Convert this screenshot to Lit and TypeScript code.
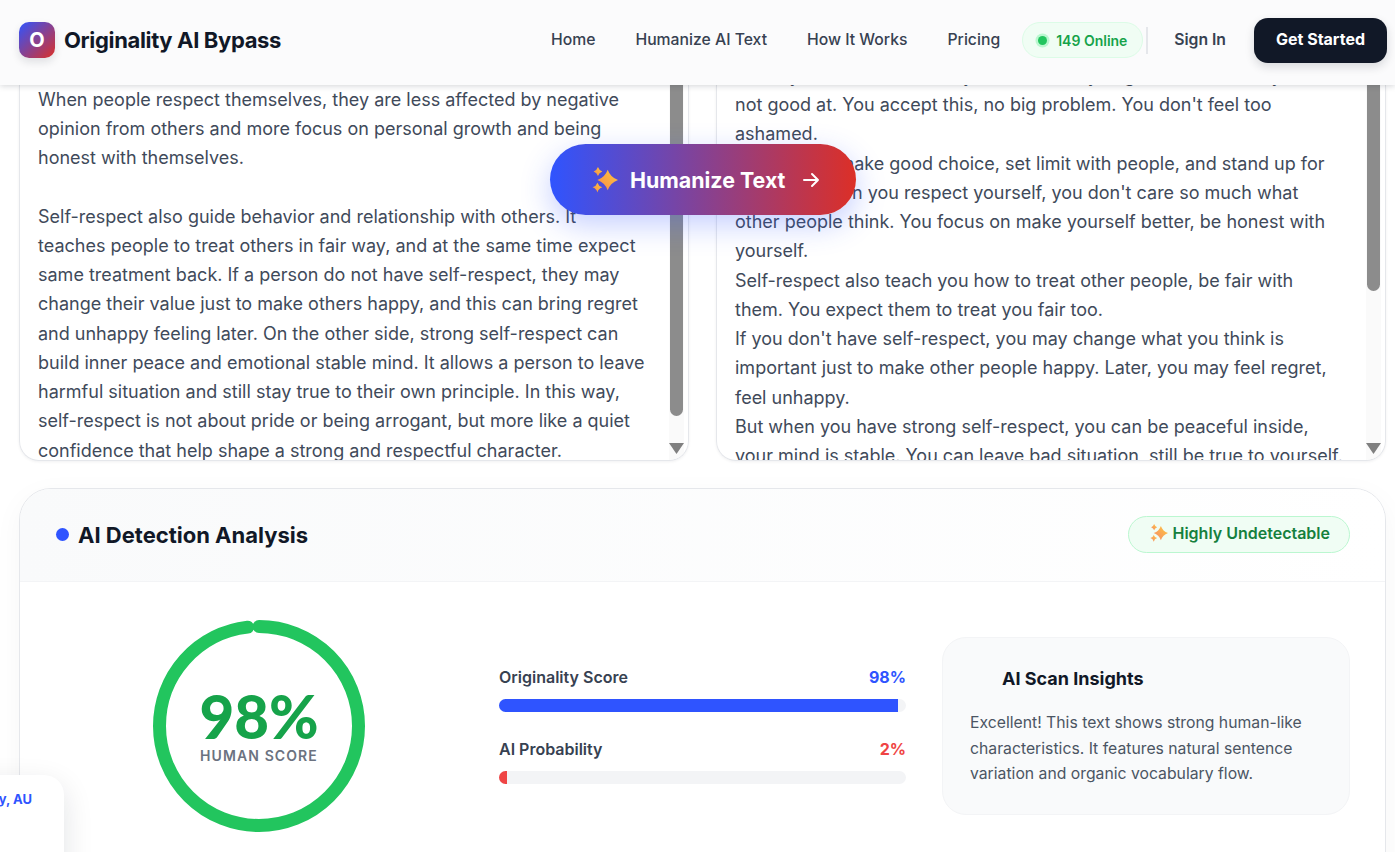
import { LitElement, html, css } from 'lit';
import { customElement } from 'lit/decorators.js';

const LEFT_TEXT = `When people respect themselves, they are less affected by negative opinion from others and more focus on personal growth and being honest with themselves.

Self-respect also guide behavior and relationship with others. It teaches people to treat others in fair way, and at the same time expect same treatment back. If a person do not have self-respect, they may change their value just to make others happy, and this can bring regret and unhappy feeling later. On the other side, strong self-respect can build inner peace and emotional stable mind. It allows a person to leave harmful situation and still stay true to their own principle. In this way, self-respect is not about pride or being arrogant, but more like a quiet confidence that help shape a strong and respectful character.`;

const RIGHT_TEXT = `When you are honest, and you know that you good at and how you
not good at. You accept this, no big problem. You don't feel too ashamed.
It helps you make good choice, set limit with people, and stand up for yourself. When you respect yourself, you don't care so much what other people think. You focus on make yourself better, be honest with yourself.
Self-respect also teach you how to treat other people, be fair with them. You expect them to treat you fair too.
If you don't have self-respect, you may change what you think is important just to make other people happy. Later, you may feel regret, feel unhappy.
But when you have strong self-respect, you can be peaceful inside, your mind is stable. You can leave bad situation, still be true to yourself.`;

const sparkle = (id: string, size: number, from: string, to: string) => html`
  <svg width=${size} height=${size} viewBox="0 0 24 24">
    <defs>
      <linearGradient id=${id} x1="1" y1="0" x2="0" y2="1">
        <stop offset="0" stop-color=${from}></stop>
        <stop offset="1" stop-color=${to}></stop>
      </linearGradient>
    </defs>
    <path fill="url(#${id})" d="M14.5 2.5Q17 9.5 24 12 17 14.5 14.5 21.5 12 14.5 5 12 12 9.5 14.5 2.5z"></path>
    <path fill="url(#${id})" d="M5.5 0Q6.5 3 9.5 4.2 6.500 5.4 5.5 8.4 4.5 5.4 1.5 4.2 4.5 3 5.5 0z"></path>
    <path fill="url(#${id})" d="M5 14.5Q6 17.6 9.5 18.8 6 20 5 23.5 4 20 .5 18.8 4 17.6 5 14.5z"></path>
  </svg>
`;

@customElement('app-root')
export class AppRoot extends LitElement {
  static styles = css`
    :host {
      display: block;
      position: relative;
      height: 852px;
      overflow: hidden;
      background: #fff;
      font-family: Inter, 'Liberation Sans', sans-serif;
      color: #374151;
    }
    .topbar {
      position: relative;
      z-index: 5;
      height: 85px;
      box-sizing: border-box;
      padding: 0 8px 5px 19px;
      display: flex;
      align-items: center;
      justify-content: space-between;
      background: #fbfbfc;
      box-shadow: 0 1px 6px rgba(17, 24, 39, 0.18);
    }
    .brand {
      display: flex;
      align-items: center;
      gap: 9px;
    }
    .logo {
      width: 36px;
      height: 36px;
      border-radius: 10px;
      background: linear-gradient(135deg, #2f54ff, #dc2f27);
      color: #fff;
      font-weight: 700;
      font-size: 20px;
      display: flex;
      align-items: center;
      justify-content: center;
      box-shadow: 0 4px 8px rgba(17, 24, 39, 0.12);
    }
    .brand-name {
      font-size: 22px;
      font-weight: 700;
      letter-spacing: -0.35px;
      color: #111827;
    }
    .right {
      display: flex;
      align-items: center;
    }
    nav {
      display: flex;
      gap: 40px;
      font-size: 15.75px;
      font-weight: 500;
      color: #374151;
      margin: 0 22px 2px 0;
    }
    .online {
      height: 36px;
      width: 121px;
      box-sizing: border-box;
      border-radius: 18px;
      border: 1px solid #dcfce7;
      background: #f0fdf4;
      display: flex;
      align-items: center;
      gap: 9px;
      padding-left: 15px;
      font-size: 14px;
      font-weight: 600;
      color: #16a34a;
    }
    .pulse {
      width: 9px;
      height: 9px;
      border-radius: 50%;
      background: #22c55e;
      box-shadow: 0 0 0 2.5px #bbf7d0;
    }
    .divider {
      width: 2px;
      height: 27px;
      background: #e5e7eb;
      margin: 0 26px 0 3px;
    }
    .sign-in {
      font-size: 15.75px;
      font-weight: 600;
      color: #374151;
      margin: 0 28px 2px 0;
    }
    .cta {
      width: 133px;
      height: 45px;
      box-sizing: border-box;
      padding-bottom: 2px;
      border-radius: 14px;
      background: #111827;
      color: #fff;
      font-size: 16px;
      font-weight: 700;
      display: flex;
      align-items: center;
      justify-content: center;
      box-shadow: 0 4px 10px rgba(17, 24, 39, 0.15);
    }

    main {
      position: relative;
      width: 1367px;
      margin-left: 19px;
    }
    .editors {
      display: flex;
      gap: 27px;
      height: 376px;
    }
    .editor {
      position: relative;
      flex: 1;
      overflow: hidden;
      box-sizing: border-box;
      border: 1px solid #e5e7eb;
      border-top: none;
      border-radius: 0 0 20px 20px;
      box-shadow: 0 1px 3px rgba(17, 24, 39, 0.06);
    }
    .copy {
      margin: -0.4px 0 0;
      padding: 0 42px 0 18px;
      font-size: 18px;
      line-height: 29.25px;
      color: #3f4a5a;
      white-space: pre-wrap;
    }
    .editor.output .copy {
      margin-top: -24.2px;
    }
    .track {
      position: absolute;
      top: 0;
      right: 4px;
      bottom: 0;
      width: 15px;
      background: #fafafa;
    }
    .thumb {
      position: absolute;
      top: 0;
      left: 1px;
      width: 13px;
      background: #8c8c8c;
      border-radius: 0 0 7px 7px;
    }
    .arrow {
      position: absolute;
      left: 0;
      bottom: 6px;
      width: 15px;
      height: 11px;
    }
    .humanize {
      position: absolute;
      z-index: 3;
      left: 531px;
      top: 59px;
      width: 306px;
      height: 71px;
      box-sizing: border-box;
      padding-left: 42px;
      border-radius: 36px;
      background: linear-gradient(90deg, #2f54ff, #dc2f27);
      box-shadow: 0 10px 30px rgba(47, 84, 255, 0.28);
      color: #fff;
      display: flex;
      align-items: center;
      gap: 12px;
      font-size: 21.4px;
      font-weight: 700;
    }
    .humanize .go {
      margin-left: 2px;
    }

    .analysis {
      margin-top: 27px;
      height: 420px;
      box-sizing: border-box;
      border: 1px solid #e5e7eb;
      border-radius: 32px;
      overflow: hidden;
      background: #fff;
      box-shadow: 0 8px 30px rgba(17, 24, 39, 0.04);
    }
    .analysis-head {
      height: 93px;
      box-sizing: border-box;
      padding: 0 35px 1px 36px;
      display: flex;
      align-items: center;
      justify-content: space-between;
      background: linear-gradient(90deg, #f9fafb, #fff);
      border-bottom: 1px solid #f3f4f6;
    }
    .analysis-title {
      display: flex;
      align-items: center;
      gap: 9px;
      font-size: 22px;
      font-weight: 700;
      color: #111827;
    }
    .dot {
      width: 13px;
      height: 13px;
      border-radius: 50%;
      background: #2f54ff;
    }
    .verdict {
      height: 37px;
      box-sizing: border-box;
      padding: 0 19px 2px 21px;
      margin-bottom: 1px;
      display: flex;
      align-items: center;
      gap: 4px;
      border: 1px solid #bbf7d0;
      border-radius: 19px;
      background: #f0fdf4;
      color: #15803d;
      font-size: 16px;
      font-weight: 600;
    }
    .analysis-body {
      display: grid;
      grid-template-columns: 407px 407px 408px;
      gap: 36px;
      align-items: center;
      padding: 38px 35px 38px 36px;
    }
    .ring {
      position: relative;
      width: 212px;
      height: 212px;
      justify-self: center;
      margin-left: -1px;
    }
    .ring svg {
      display: block;
      transform: rotate(-90deg);
    }
    .ring-label {
      position: absolute;
      inset: 0;
      padding-bottom: 3px;
      display: flex;
      flex-direction: column;
      align-items: center;
      justify-content: center;
    }
    .ring-value {
      font-family: Lato, Inter, sans-serif;
      font-size: 60px;
      line-height: 60px;
      font-weight: 900;
      color: #16a34a;
    }
    .ring-caption {
      margin-top: 1px;
      font-size: 14px;
      font-weight: 600;
      letter-spacing: 1.1px;
      color: #6b7280;
    }
    .bars {
      display: flex;
      flex-direction: column;
      gap: 28px;
    }
    .bar-head {
      display: flex;
      justify-content: space-between;
      font-size: 16px;
      line-height: 18px;
      font-weight: 600;
      color: #374151;
      margin-bottom: 13px;
    }
    .bar-head b {
      font-weight: 700;
    }
    .bar-track {
      height: 13px;
      border-radius: 7px;
      background: #f3f4f6;
      overflow: hidden;
    }
    .bar-fill {
      height: 100%;
    }
    .insights {
      height: 178px;
      box-sizing: border-box;
      padding: 28px 27px;
      border: 1px solid #f3f4f6;
      border-radius: 24px;
      background: #f9fafb;
    }
    .insights h3 {
      margin: 0 0 18px 32px;
      font-size: 18px;
      line-height: 26px;
      font-weight: 700;
      color: #111827;
    }
    .insights p {
      margin: 0;
      font-size: 15.75px;
      line-height: 25.5px;
      color: #4b5563;
    }
    .toast {
      position: absolute;
      z-index: 4;
      right: 1331px;
      top: 775px;
      width: 240px;
      height: 110px;
      box-sizing: border-box;
      padding: 15px 32px 0 0;
      border-radius: 20px;
      background: #fff;
      box-shadow: 0 10px 30px rgba(17, 24, 39, 0.12);
      font-size: 13px;
      line-height: 18px;
      font-weight: 700;
      color: #2f54ff;
      text-align: right;
    }
  `;

  private renderEditor(kind: string, text: string, thumb: number) {
    return html`
      <section class="editor ${kind}">
        <p class="copy">${text}</p>
        <div class="track">
          <div class="thumb" style="height:${thumb}px"></div>
          <svg class="arrow" viewBox="0 0 15 11"><path fill="#808080" d="M0 0h15L7.5 11z"></path></svg>
        </div>
      </section>
    `;
  }

  private renderBar(label: string, value: number, color: string) {
    return html`
      <div>
        <div class="bar-head">
          <span>${label}</span><b style="color:${color}">${value}%</b>
        </div>
        <div class="bar-track">
          <div class="bar-fill" style="width:${value}%;background:${color}"></div>
        </div>
      </div>
    `;
  }

  render() {
    const r = 99.5;
    const circumference = 2 * Math.PI * r;
    return html`
      <header class="topbar">
        <div class="brand">
          <div class="logo">O</div>
          <div class="brand-name">Originality AI Bypass</div>
        </div>
        <div class="right">
          <nav>
            <span>Home</span>
            <span>Humanize AI Text</span>
            <span>How It Works</span>
            <span>Pricing</span>
          </nav>
          <div class="online"><span class="pulse"></span>149 Online</div>
          <div class="divider"></div>
          <div class="sign-in">Sign In</div>
          <div class="cta">Get Started</div>
        </div>
      </header>

      <main>
        <div class="editors">
          ${this.renderEditor('input', LEFT_TEXT, 331)}
          ${this.renderEditor('output', RIGHT_TEXT, 206)}
        </div>
        <div class="humanize">
          ${sparkle('spark-a', 26, '#ffc83d', '#f58a4b')}
          <span>Humanize Text</span>
          <svg class="go" width="24" height="24" viewBox="0 0 24 24" fill="none" stroke="#fff" stroke-width="2" stroke-linecap="round" stroke-linejoin="round">
            <path d="M5 12h14M13 6l6 6-6 6"></path>
          </svg>
        </div>

        <section class="analysis">
          <div class="analysis-head">
            <div class="analysis-title"><span class="dot"></span>AI Detection Analysis</div>
            <div class="verdict">${sparkle('spark-b', 18, '#ffc83d', '#f58a6b')}Highly Undetectable</div>
          </div>
          <div class="analysis-body">
            <div class="ring">
              <svg width="212" height="212" viewBox="0 0 212 212">
                <circle cx="106" cy="106" r=${r} fill="none" stroke="#22c55e" stroke-width="13" stroke-linecap="round"
                  stroke-dasharray="${circumference * 0.98} ${circumference}"></circle>
              </svg>
              <div class="ring-label">
                <div class="ring-value">98%</div>
                <div class="ring-caption">HUMAN SCORE</div>
              </div>
            </div>
            <div class="bars">
              ${this.renderBar('Originality Score', 98, '#2f54ff')}
              ${this.renderBar('AI Probability', 2, '#ef4444')}
            </div>
            <div class="insights">
              <h3>AI Scan Insights</h3>
              <p>Excellent! This text shows strong human-like characteristics. It features natural sentence variation and organic vocabulary flow.</p>
            </div>
          </div>
        </section>
      </main>

      <aside class="toast">Sydney, AU</aside>
    `;
  }
}
